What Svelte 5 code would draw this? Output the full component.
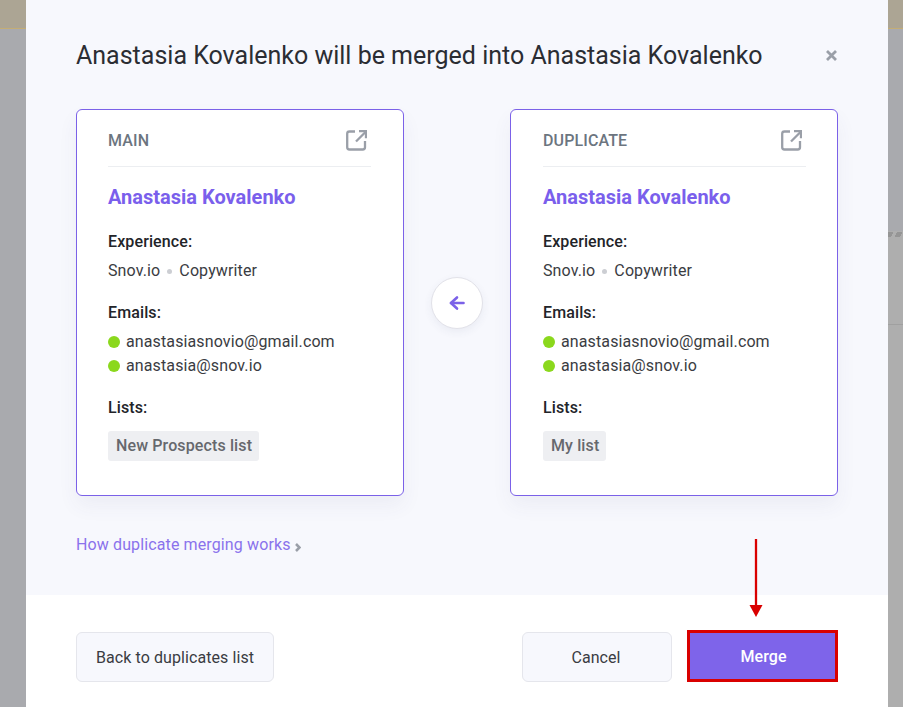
<script>
	const cards = [
		{ title: 'MAIN', list: 'New Prospects list' },
		{ title: 'DUPLICATE', list: 'My list' }
	];
	const emails = ['anastasiasnovio@gmail.com', 'anastasia@snov.io'];
</script>

{#snippet card(item)}
	<section class="card">
		<header class="card-head">
			<span class="card-title">{item.title}</span>
			<svg class="open" width="21" height="21" viewBox="0 0 21 21" fill="none" stroke="#9a9fa8" stroke-width="2.300">
				<path d="M9 1.500H3.500a2.300 2.300 0 0 0-2.300 2.300v13.400a2.300 2.300 0 0 0 2.300 2.300h13.200a2.300 2.300 0 0 0 2.300-2.300V11" />
				<path d="M10 11.500 19.500 2" />
				<path d="M13 1.200h7v7" />
			</svg>
		</header>
		<h3 class="name">Anastasia Kovalenko</h3>
		<h4>Experience:</h4>
		<p class="job">Snov.io<i class="sep"></i>Copywriter</p>
		<h4 class="emails-label">Emails:</h4>
		<ul>
			{#each emails as email}
				<li><i class="dot"></i>{email}</li>
			{/each}
		</ul>
		<h4 class="lists-label">Lists:</h4>
		<span class="tag">{item.list}</span>
	</section>
{/snippet}

<div class="backdrop">
	<div class="modal">
		<div class="body">
			<div class="title-row">
				<h2>Anastasia Kovalenko will be merged into Anastasia Kovalenko</h2>
				<button class="close" aria-label="Close">
					<svg width="11" height="11" viewBox="0 0 11 11" stroke="#9a9fa8" stroke-width="2.800">
						<path d="M1 1l9 9M10 1l-9 9" />
					</svg>
				</button>
			</div>
			<div class="compare">
				{@render card(cards[0])}
				<button class="swap" aria-label="Merge direction">
					<svg width="16" height="16" viewBox="0 0 16 16" fill="none" stroke="#7b61e8" stroke-width="2.600" stroke-linecap="round" stroke-linejoin="round">
						<path d="M14.500 8H2" />
						<path d="M8 2.500L2 8l6 5.500" />
					</svg>
				</button>
				{@render card(cards[1])}
			</div>
			<a class="how" href="#how">How duplicate merging works<svg width="6" height="9" viewBox="0 0 6 9" fill="none" stroke="#9a9fa8" stroke-width="2.600"><path d="M1 1l3.500 3.500L1 8" /></svg></a>
		</div>
		<footer>
			<button class="btn">Back to duplicates list</button>
			<div class="actions">
				<button class="btn cancel">Cancel</button>
				<button class="btn merge">Merge</button>
				<svg class="pointer" width="14" height="78" viewBox="0 0 14 78" aria-hidden="true">
					<path d="M7 0V67" stroke="#d90000" stroke-width="2.300" />
					<path d="M0.500 66h13L7 78z" fill="#d90000" />
				</svg>
			</div>
		</footer>
	</div>
</div>

<style>
	:global(body) {
		margin: 0;
		font-family: Roboto, 'Liberation Sans', sans-serif;
		letter-spacing: 0.12px;
		color: #2b2d33;
	}

	.backdrop {
		height: 707px;
		overflow: hidden;
		padding-left: 26px;
		box-sizing: border-box;
		background:
			linear-gradient(#aca594 0 28px, #c4ad74 28px 29px, transparent 29px),
			repeating-linear-gradient(115deg, #959595 0 5px, transparent 5px 8px) right 0 top 232px / 15px 5px no-repeat,
			linear-gradient(#a0a0a0, #a0a0a0) right 0 top 324px / 15px 1px no-repeat,
			linear-gradient(#aeaeae, #aeaeae) right 0 top 231px / 15px 476px no-repeat,
			#a9aaae;
	}

	.modal {
		width: 862px;
		height: 707px;
		display: flex;
		flex-direction: column;
		background: #fff;
	}

	.body {
		height: 595px;
		box-sizing: border-box;
		padding: 0 50px;
		background: #f7f8fd;
	}

	.title-row {
		display: flex;
		justify-content: space-between;
		align-items: center;
		height: 109px;
		padding-top: 3px;
		box-sizing: border-box;
	}

	h2 {
		margin: 0;
		font-size: 25px;
		font-weight: 400;
		line-height: 32px;
		letter-spacing: 0;
		color: #2b2d33;
	}

	.close {
		display: flex;
		margin: -2px 1px 0 0;
		padding: 0;
		border: none;
		background: none;
	}

	.compare {
		display: flex;
		justify-content: space-between;
		align-items: center;
	}

	.card {
		width: 328px;
		height: 387px;
		box-sizing: border-box;
		padding: 0 31px 0 32px;
		border: 1px solid #7b61e8;
		border-radius: 6px;
		background: #fff;
		box-shadow: 0 10px 20px rgba(60, 70, 120, 0.06);
		font-size: 16px;
		line-height: 24px;
	}

	.card:first-child {
		padding: 0 32px 0 31px;
	}

	.card-head {
		display: flex;
		justify-content: space-between;
		align-items: center;
		height: 57px;
		padding-top: 5px;
		box-sizing: border-box;
		border-bottom: 1px solid #eceef1;
	}

	.card-title {
		font-weight: 500;
		color: #6c757f;
	}

	.open {
		margin-right: 4px;
	}

	.name {
		margin: 17px 0 0;
		font-size: 20px;
		line-height: 26px;
		font-weight: 700;
		letter-spacing: 0;
		color: #7a5fec;
	}

	h4 {
		margin: 20px 0 0;
		font-size: 16px;
		line-height: 24px;
		font-weight: 500;
		color: #222429;
	}

	.job {
		margin: 5px 0 0;
		color: #3a3c42;
	}

	.sep {
		display: inline-block;
		width: 5px;
		height: 5px;
		margin: 0 7px;
		border-radius: 50%;
		background: #ccced3;
		vertical-align: 2px;
	}

	.emails-label {
		margin-top: 18px;
	}

	ul {
		margin: 5px 0 0;
		padding: 0;
		list-style: none;
		color: #3a3c42;
	}

	li {
		display: flex;
		align-items: center;
	}

	.dot {
		width: 12px;
		height: 12px;
		margin-right: 6px;
		border-radius: 50%;
		background: #8bd81d;
	}

	.lists-label {
		margin-top: 18px;
	}

	.tag {
		display: inline-block;
		margin-top: 11px;
		padding: 3px 7px 3px 8px;
		border-radius: 3px;
		background: #eeeff2;
		color: #66686d;
		font-weight: 500;
	}

	.swap {
		display: flex;
		align-items: center;
		justify-content: center;
		width: 52px;
		height: 52px;
		padding: 0;
		border: 1px solid #e2e2e9;
		border-radius: 50%;
		background: #fff;
		box-shadow: 0 3px 8px rgba(60, 70, 120, 0.07);
	}

	.how {
		display: inline-flex;
		align-items: center;
		gap: 4px;
		margin-top: 37px;
		font-size: 16px;
		line-height: 24px;
		color: #8a72ec;
		text-decoration: none;
	}

	.how svg {
		margin-top: 5px;
	}

	footer {
		display: flex;
		justify-content: space-between;
		align-items: center;
		flex: 1;
		padding: 12px 50px 0;
		box-sizing: border-box;
	}

	.actions {
		position: relative;
		display: flex;
		gap: 16px;
		align-items: center;
	}

	.btn {
		height: 50px;
		box-sizing: border-box;
		padding: 0 19px;
		border: 1px solid #e5e6ec;
		border-radius: 6px;
		background: #f7f8fd;
		font: 400 16px Roboto, 'Liberation Sans', sans-serif;
		letter-spacing: 0.08px;
		color: #3a3c42;
	}

	.cancel {
		width: 150px;
		padding: 0 20px 0 18px;
	}

	.merge {
		width: 151px;
		height: 52px;
		margin: -2px 0 0 -1px;
		padding: 0 18px 0 20px;
		border: 3px solid #d90000;
		border-radius: 0;
		background: #7e64ea;
		color: #fff;
		font-weight: 500;
	}

	.pointer {
		position: absolute;
		left: 227px;
		top: -93px;
	}
</style>
